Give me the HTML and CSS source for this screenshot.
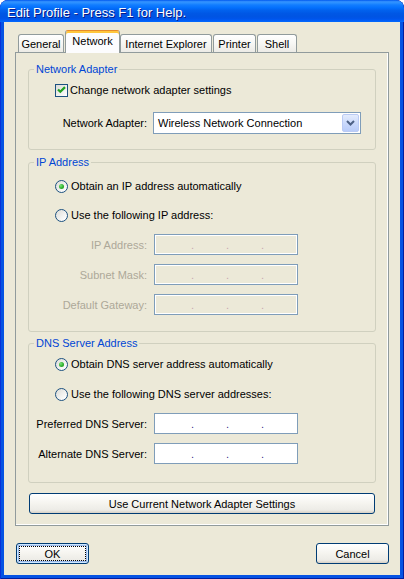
FILE: index.html
```html
<!DOCTYPE html>
<html>
<head>
<meta charset="utf-8">
<title>Edit Profile</title>
<link rel="stylesheet" href="styles.css">
</head>
<body>
<div class="window">
  <div class="titlebar"><span class="title">Edit Profile - Press F1 for Help.</span></div>
  <div class="frame">
    <div class="tabs">
      <div class="tab t-general">General</div>
      <div class="tab active t-network">Network</div>
      <div class="tab t-ie">Internet Explorer</div>
      <div class="tab t-printer">Printer</div>
      <div class="tab t-shell">Shell</div>
    </div>
    <div class="panel">
      <fieldset class="group g1">
        <legend>Network Adapter</legend>
        <div class="row opt-row first">
          <span class="checkbox"><svg width="11" height="11" viewBox="0 0 11 11"><path d="M2 4.5 L4.3 6.8 L9 2.1" fill="none" stroke="#21A121" stroke-width="2.2"/></svg></span>
          <span class="opt-text cb-text">Change network adapter settings</span>
        </div>
        <div class="row field-row combo-row">
          <span class="field-label">Network Adapter:</span>
          <div class="combo">
            <span class="combo-text">Wireless Network Connection</span>
            <span class="combo-btn"><svg width="9" height="6" viewBox="0 0 9 6"><path d="M1 1 L4.5 4.5 L8 1" fill="none" stroke="#4D6185" stroke-width="2"/></svg></span>
          </div>
        </div>
      </fieldset>

      <fieldset class="group g2">
        <legend>IP Address</legend>
        <div class="row opt-row first">
          <span class="radio checked"><span class="dot-in"></span></span>
          <span class="opt-text">Obtain an IP address automatically</span>
        </div>
        <div class="row opt-row gap9">
          <span class="radio"></span>
          <span class="opt-text">Use the following IP address:</span>
        </div>
        <div class="row field-row ip-row gap9 disabled">
          <span class="field-label">IP Address:</span>
          <div class="ip"><span class="ipdot">.</span><span class="ipdot">.</span><span class="ipdot">.</span></div>
        </div>
        <div class="row field-row ip-row gap9 disabled">
          <span class="field-label">Subnet Mask:</span>
          <div class="ip"><span class="ipdot">.</span><span class="ipdot">.</span><span class="ipdot">.</span></div>
        </div>
        <div class="row field-row ip-row gap9 disabled">
          <span class="field-label">Default Gateway:</span>
          <div class="ip"><span class="ipdot">.</span><span class="ipdot">.</span><span class="ipdot">.</span></div>
        </div>
      </fieldset>

      <fieldset class="group g3">
        <legend>DNS Server Address</legend>
        <div class="row opt-row first">
          <span class="radio checked"><span class="dot-in"></span></span>
          <span class="opt-text">Obtain DNS server address automatically</span>
        </div>
        <div class="row opt-row gap10">
          <span class="radio"></span>
          <span class="opt-text">Use the following DNS server addresses:</span>
        </div>
        <div class="row field-row ip-row gap9">
          <span class="field-label">Preferred DNS Server:</span>
          <div class="ip"><span class="ipdot">.</span><span class="ipdot">.</span><span class="ipdot">.</span></div>
        </div>
        <div class="row field-row ip-row gap9">
          <span class="field-label">Alternate DNS Server:</span>
          <div class="ip"><span class="ipdot">.</span><span class="ipdot">.</span><span class="ipdot">.</span></div>
        </div>
      </fieldset>

      <div class="btn wide">Use Current Network Adapter Settings</div>
    </div>
    <div class="buttons">
      <div class="btn small default"><span class="focus">OK</span></div>
      <div class="btn small">Cancel</div>
    </div>
  </div>
</div>
</body>
</html>
```

FILE: styles.css
```css
html, body {
  margin: 0;
  padding: 0;
}
body {
  width: 404px;
  height: 579px;
  overflow: hidden;
  background: #ffffff;
  font-family: "Liberation Sans", Arial, sans-serif;
  font-size: 11px;
  color: #000000;
}

.window {
  height: 579px;
  display: flex;
  flex-direction: column;
  background: #0553E3;
  border-radius: 8px 8px 0 0;
  box-shadow: inset 1px 0 0 #0831D9, inset -1px 0 0 #001EA0, inset 0 -1px 0 #001EA0;
  overflow: hidden;
}

.titlebar {
  height: 22px;
  flex: none;
  display: flex;
  align-items: center;
  padding-left: 7px;
  border-radius: 8px 8px 0 0;
  background: linear-gradient(to bottom, #0058EE 0%, #3593FF 8%, #288EFF 14%, #127DFF 22%, #036FFC 36%, #0262EE 46%, #0057E5 62%, #0054E3 76%, #0055EB 86%, #005BF5 92%, #026AFE 100%);
}
.title {
  color: #ffffff;
  font-size: 13px;
  margin-top: 3px;
  text-shadow: 1px 1px 0 #0A1883;
}

.frame {
  flex: 1;
  margin: 0 4px 4px 4px;
  background: #ECE9D8;
  padding: 8px 11px 11px 11px;
  display: flex;
  flex-direction: column;
}

/* tabs */
.tabs {
  display: flex;
  align-items: flex-end;
  height: 22px;
  padding-left: 3px;
}
.tab {
  box-sizing: border-box;
  height: 18px;
  border: 1px solid #919B9C;
  border-bottom: none;
  border-radius: 3px 3px 0 0;
  background: linear-gradient(to bottom, #FFFFFF 0%, #F7F7F4 50%, #ECEBE6 100%);
  display: flex;
  align-items: center;
  justify-content: center;
  padding-top: 1px;
}
.t-general { width: 46px; }
.t-network { width: 55px; margin-left: 1px; }
.t-ie { width: 92px; }
.t-printer { width: 43px; margin-left: 1px; }
.t-shell { width: 40px; margin-left: 1px; }
.tab.active {
  height: 23px;
  margin-bottom: -1px;
  position: relative;
  z-index: 1;
  background: #FCFCFE;
  border-top: 1px solid #E68B2C;
  box-shadow: inset 0 2px 0 #FFC73C;
  padding-top: 0;
  padding-bottom: 2px;
}

/* panel */
.panel {
  border: 1px solid #919B9C;
  background: #ECE9D8;
  box-shadow: inset -1px -1px 0 #FFFFFF;
  padding: 9px 12px 11px 12px;
  display: flex;
  flex-direction: column;
}

.group {
  margin: 0;
  padding: 0;
  min-width: 0;
  border: 1px solid #D0D0BF;
  border-radius: 3px;
}
.group legend {
  margin-left: 5px;
  padding: 0 2px;
  line-height: 14px;
  height: 14px;
  color: #0046D5;
}
.g1 { padding-bottom: 15px; }
.g2 { margin-top: 5px; padding-bottom: 16px; }
.g3 { margin-top: 4px; padding-bottom: 18px; }

.row {
  display: flex;
  align-items: center;
  height: 20px;
}
.g1 .first { margin-top: 4px; }
.g2 .first { margin-top: 7px; }
.g3 .first { margin-top: 4px; }
.gap9 { margin-top: 9px; }
.gap10 { margin-top: 10px; }
.combo-row { margin-top: 12px; height: 22px; }
.ip-row { height: 21px; }

.opt-row { padding-left: 26px; }
.opt-text { margin-left: 3px; }
.cb-text { margin-left: 2px; }

.checkbox {
  box-sizing: border-box;
  width: 13px;
  height: 13px;
  border: 1px solid #1C5180;
  background: linear-gradient(135deg, #DCDCD7 0%, #FFFFFF 100%);
  display: flex;
  align-items: center;
  justify-content: center;
}

.radio {
  box-sizing: border-box;
  width: 13px;
  height: 13px;
  border-radius: 50%;
  border: 1px solid #1C5180;
  background: linear-gradient(135deg, #DCDCD7 0%, #FFFFFF 90%);
  display: flex;
  align-items: center;
  justify-content: center;
}
.dot-in {
  width: 5px;
  height: 5px;
  border-radius: 50%;
  background: radial-gradient(circle at 35% 35%, #7BE37A 0%, #2EB02C 55%, #1F8F1E 100%);
}

.field-label {
  width: 118px;
  text-align: right;
  flex: none;
}
.disabled .field-label { color: #ACA899; }

.combo {
  box-sizing: border-box;
  margin-left: 6px;
  width: 208px;
  height: 22px;
  border: 1px solid #7F9DB9;
  background: #FFFFFF;
  display: flex;
  align-items: center;
  padding: 1px;
}
.combo-text {
  flex: 1;
  padding-left: 3px;
}
.combo-btn {
  box-sizing: border-box;
  width: 17px;
  height: 18px;
  border: 1px solid #BACBF4;
  border-radius: 2px;
  background: linear-gradient(to bottom, #E4ECFD 0%, #C7D7FB 60%, #B9CCF9 100%);
  display: flex;
  align-items: center;
  justify-content: center;
}

.ip {
  box-sizing: border-box;
  margin-left: 7px;
  width: 144px;
  height: 21px;
  border: 1px solid #7F9DB9;
  background: #FFFFFF;
  display: flex;
  align-items: center;
  padding-left: 36px;
  gap: 32px;
}
.ipdot {
  width: 3px;
  color: #3B1F8A;
  line-height: 11px;
  margin-top: 1px;
}
.disabled .ip {
  background: #ECE9D8;
  box-shadow: inset 0 0 0 1px #FFFFFF;
}
.disabled .ipdot { color: #C8A8B0; }

/* buttons */
.btn {
  box-sizing: border-box;
  height: 21px;
  border: 1px solid #003C74;
  border-radius: 3px;
  background: linear-gradient(to bottom, #FFFFFF 0%, #F5F4EF 50%, #ECEBE6 85%, #D6D0C5 100%);
  display: flex;
  align-items: center;
  justify-content: center;
}
.btn.wide {
  margin: 10px 1px 0 1px;
}
.buttons {
  margin-top: 17px;
  display: flex;
  justify-content: space-between;
  padding-left: 1px;
}
.btn.small { width: 73px; }
.btn.default {
  padding: 2px;
  box-shadow: inset 0 0 0 1px #CEE7FF, inset 0 0 0 2px #98B8EA;
}
.focus {
  box-sizing: border-box;
  flex: 1;
  align-self: stretch;
  display: flex;
  align-items: center;
  justify-content: center;
  border: 1px dotted #000000;
}
```
